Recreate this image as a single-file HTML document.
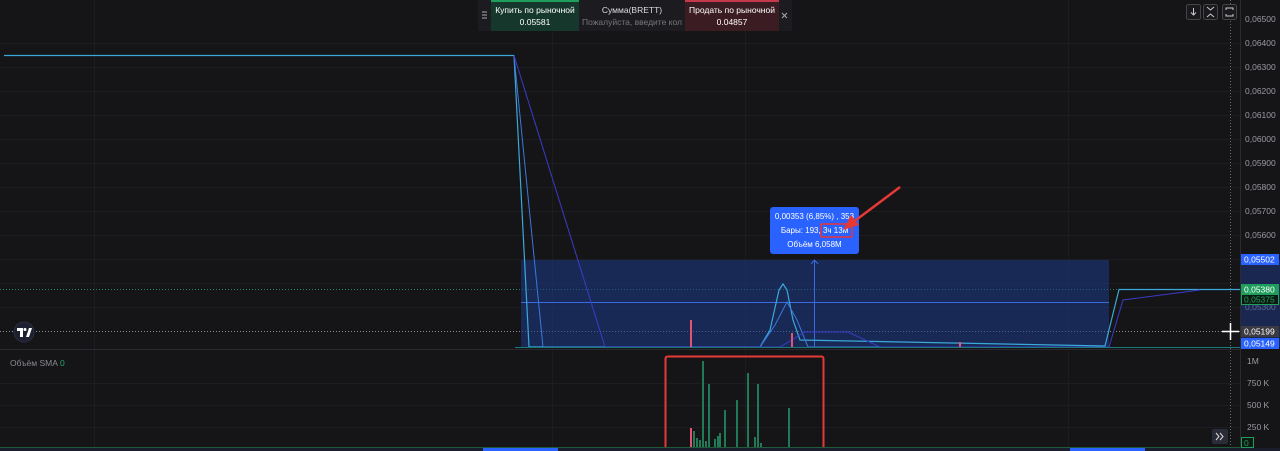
<!DOCTYPE html>
<html><head><meta charset="utf-8"><style>
html,body{margin:0;padding:0;background:#151518;width:1280px;height:451px;overflow:hidden}
svg{display:block}
text{font-family:"Liberation Sans","DejaVu Sans",sans-serif}
</style></head><body>
<svg width="1280" height="451" viewBox="0 0 1280 451" xmlns="http://www.w3.org/2000/svg">
<rect width="1280" height="451" fill="#151518"/>
<g stroke="#1c1c21" stroke-width="1">
<line x1="0" y1="43.5" x2="1240" y2="43.5"/><line x1="0" y1="67.5" x2="1240" y2="67.5"/><line x1="0" y1="91.5" x2="1240" y2="91.5"/><line x1="0" y1="115.5" x2="1240" y2="115.5"/><line x1="0" y1="139.5" x2="1240" y2="139.5"/><line x1="0" y1="163.5" x2="1240" y2="163.5"/><line x1="0" y1="187.5" x2="1240" y2="187.5"/><line x1="0" y1="211.5" x2="1240" y2="211.5"/><line x1="0" y1="235.5" x2="1240" y2="235.5"/><line x1="0" y1="259.5" x2="1240" y2="259.5"/><line x1="0" y1="283.5" x2="1240" y2="283.5"/><line x1="0" y1="307.5" x2="1240" y2="307.5"/>
<line x1="0" y1="383.5" x2="1240" y2="383.5"/><line x1="0" y1="405.5" x2="1240" y2="405.5"/><line x1="0" y1="427.5" x2="1240" y2="427.5"/>
<line x1="94.5" y1="0" x2="94.5" y2="451"/><line x1="552.5" y1="0" x2="552.5" y2="451"/><line x1="745.5" y1="0" x2="745.5" y2="451"/><line x1="1068.5" y1="0" x2="1068.5" y2="451"/>
</g>
<line x1="0" y1="349.5" x2="1240" y2="349.5" stroke="#2a2a30"/>
<line x1="1240.5" y1="0" x2="1240.5" y2="451" stroke="#2a2a30"/>
<line x1="1230.5" y1="0" x2="1230.5" y2="451" stroke="#6a6a70" stroke-dasharray="1,2"/>
<line x1="0" y1="331.5" x2="1240" y2="331.5" stroke="#8a8a90" stroke-dasharray="1,2"/>
<line x1="0" y1="289.5" x2="1240" y2="289.5" stroke="#1f8a6a" stroke-dasharray="1,2"/>
<rect x="521" y="260" width="588" height="87" fill="#1e3a8a" fill-opacity="0.55"/>
<line x1="521" y1="302.5" x2="1109" y2="302.5" stroke="#3a6ae0"/>
<line x1="814.5" y1="260" x2="814.5" y2="347" stroke="#3a6ae0"/>
<path d="M811 264 L814.5 260 L818 264" fill="none" stroke="#3a6ae0"/>
<polyline points="4,55.5 514,55.5 529,347 760,347 770,330 779,290 783,284 787,290 793,320 800,340 1105,346 1119,289.5 1240,289.5" fill="none" stroke="#3aa8d8" stroke-width="1.2"/>
<polyline points="514,55.5 543,347 760,347 775,325 787,302 797,320 808,347 1109,347" fill="none" stroke="#3a78e0" stroke-width="1"/>
<polyline points="514,55.5 605,347 780,347 805,332 848,332 880,347 1109,347 1123,300 1200,290" fill="none" stroke="#3b3bc8" stroke-width="1"/>
<line x1="515" y1="347.5" x2="1240" y2="347.5" stroke="#1d7a7a"/>
<rect x="690" y="320" width="2" height="27" fill="#e05575"/><rect x="791" y="333" width="2" height="14" fill="#e05575"/><rect x="959" y="342" width="2" height="5" fill="#e05575"/>
<rect x="770" y="207" width="89" height="47" rx="3" fill="#2962ff"/>
<text x="814.5" y="219" fill="#fff" font-size="8" text-anchor="middle">0,00353 (6,85%) , 353</text>
<text x="814.5" y="233" fill="#fff" font-size="8" text-anchor="middle">Бары: 193, 3ч 13м</text>
<text x="814.5" y="247" fill="#fff" font-size="8" text-anchor="middle">Объём 6,058M</text>
<rect x="821" y="224" width="31" height="13" fill="none" stroke="#e33" stroke-width="1.5" rx="1"/>
<line x1="900" y1="187" x2="852" y2="223" stroke="#e53935" stroke-width="2.5"/>
<path d="M843 230 L859 225 L851 215 Z" fill="#e53935"/>
<g fill="#1f7a55">
<rect x="693" y="431" width="2" height="16"/><rect x="696" y="438" width="2" height="9"/><rect x="699" y="440" width="2" height="7"/><rect x="702" y="361" width="2" height="86"/><rect x="705" y="441" width="2" height="6"/><rect x="708" y="384" width="2" height="63"/><rect x="714" y="439" width="2" height="8"/><rect x="717" y="436" width="2" height="11"/><rect x="719" y="433" width="2" height="14"/><rect x="724" y="410" width="2" height="37"/><rect x="736" y="400" width="2" height="47"/><rect x="747" y="373" width="2" height="74"/><rect x="754" y="437" width="2" height="10"/><rect x="757" y="384" width="2" height="63"/><rect x="760" y="443" width="2" height="4"/><rect x="788" y="408" width="2" height="39"/>
</g>
<rect x="690" y="428" width="2" height="19" fill="#e05575"/>
<rect x="665.5" y="356.5" width="158" height="93" fill="none" stroke="#e53935" stroke-width="2" rx="2"/>
<line x1="0" y1="447.5" x2="1240" y2="447.5" stroke="#1f5a3a"/>
<rect x="0" y="448" width="1280" height="3" fill="#1a1e2c"/>
<rect x="483" y="448" width="75" height="3" fill="#2962ff"/><rect x="1070" y="448" width="75" height="3" fill="#2962ff"/>
<text x="10" y="366" fill="#8a8a90" font-size="8.5">Объём SMA</text><text x="60" y="366" fill="#26a269" font-size="8.5">0</text>
<circle cx="24" cy="332" r="10" fill="#1d2030" stroke="#2a2e40"/>
<path d="M17 328 H23 V337 H20 V331 H17 Z M26 337 L29 328 H32 L29 337 Z" fill="#fff"/>
<circle cx="25" cy="329.5" r="1.5" fill="#fff"/>
<g fill="#9a9aa0" font-size="8.5">
<text x="1245" y="22">0,06500</text><text x="1245" y="46">0,06400</text><text x="1245" y="70">0,06300</text><text x="1245" y="94">0,06200</text><text x="1245" y="118">0,06100</text><text x="1245" y="142">0,06000</text><text x="1245" y="166">0,05900</text><text x="1245" y="190">0,05800</text><text x="1245" y="214">0,05700</text><text x="1245" y="238">0,05600</text><text x="1245" y="310">0,05300</text>
<text x="1247" y="364">1M</text><text x="1247" y="386">750 K</text><text x="1247" y="408">500 K</text><text x="1247" y="430">250 K</text>
</g>
<rect x="1241" y="260" width="39" height="87" fill="#1e3a8a" fill-opacity="0.5"/>
<rect x="1241" y="254" width="38" height="11" fill="#2962ff"/><text x="1244" y="262.5" fill="#fff" font-size="8.5">0,05502</text>
<rect x="1241" y="284" width="38" height="11" fill="#1f9d5c"/><text x="1244" y="292.5" fill="#fff" font-size="8.5">0,05380</text>
<rect x="1241.5" y="294.5" width="37" height="10" fill="#0d1a12" stroke="#1f9d5c"/><text x="1244" y="302.5" fill="#1f9d5c" font-size="8.5">0,05375</text>
<rect x="1241" y="326" width="38" height="11" fill="#3a3a40"/><text x="1244" y="334.5" fill="#fff" font-size="8.5">0,05199</text>
<rect x="1241" y="338" width="38" height="11" fill="#2962ff"/><text x="1244" y="346.5" fill="#fff" font-size="8.5">0,05149</text>
<rect x="1241.5" y="437.5" width="12" height="10" fill="#0d1a12" stroke="#1f9d5c"/><text x="1244" y="446" fill="#1f9d5c" font-size="8.5">0</text>
<path d="M1222 331.5 H1239 M1230.5 323 V340" stroke="#fff" stroke-width="1.5"/>
<g fill="none" stroke="#444">
<rect x="1186.5" y="4.5" width="14" height="15" rx="2" fill="#1a1a1e"/><rect x="1203.5" y="4.5" width="14" height="15" rx="2" fill="#1a1a1e"/><rect x="1222.5" y="4.5" width="14" height="15" rx="2" fill="#1a1a1e"/>
</g>
<path d="M1193.5 8 V15 M1191 12.5 L1193.5 15 L1196 12.5" fill="none" stroke="#ccc"/>
<path d="M1207 7 L1210.5 10 L1214 7 M1207 17 L1210.5 14 L1214 17" fill="none" stroke="#ccc"/>
<path d="M1226 10 V8 H1233 V10 M1226 14 V16 H1233 V14" fill="none" stroke="#ccc"/>
<rect x="1212" y="429" width="16" height="15" rx="2" fill="#2a2d38"/>
<path d="M1216 433 L1219 436.5 L1216 440 M1220 433 L1223 436.5 L1220 440" fill="none" stroke="#ddd"/>
<rect x="478" y="0" width="314" height="31" fill="#1c1c20"/>
<path d="M482 12H487M482 15H487M482 18H487" stroke="#aaa"/>
<rect x="491" y="2" width="88" height="29" fill="#16382c"/><rect x="491" y="0" width="88" height="2" fill="#1f9d5c"/>
<text x="535" y="13" fill="#fff" font-size="8.5" text-anchor="middle">Купить по рыночной</text>
<text x="535" y="25" fill="#fff" font-size="8.5" text-anchor="middle">0.05581</text>
<text x="632" y="13" fill="#ddd" font-size="8.5" text-anchor="middle">Сумма(BRETT)</text>
<text x="632" y="25" fill="#777" font-size="8.5" text-anchor="middle">Пожалуйста, введите кол</text>
<rect x="685" y="2" width="94" height="29" fill="#3a1c22"/><rect x="685" y="0" width="94" height="2" fill="#c43a4a"/>
<text x="732" y="13" fill="#fff" font-size="8.5" text-anchor="middle">Продать по рыночной</text>
<text x="732" y="25" fill="#fff" font-size="8.5" text-anchor="middle">0.04857</text>
<path d="M782 13 L787 18 M787 13 L782 18" stroke="#aaa"/>
</svg>
</body></html>
